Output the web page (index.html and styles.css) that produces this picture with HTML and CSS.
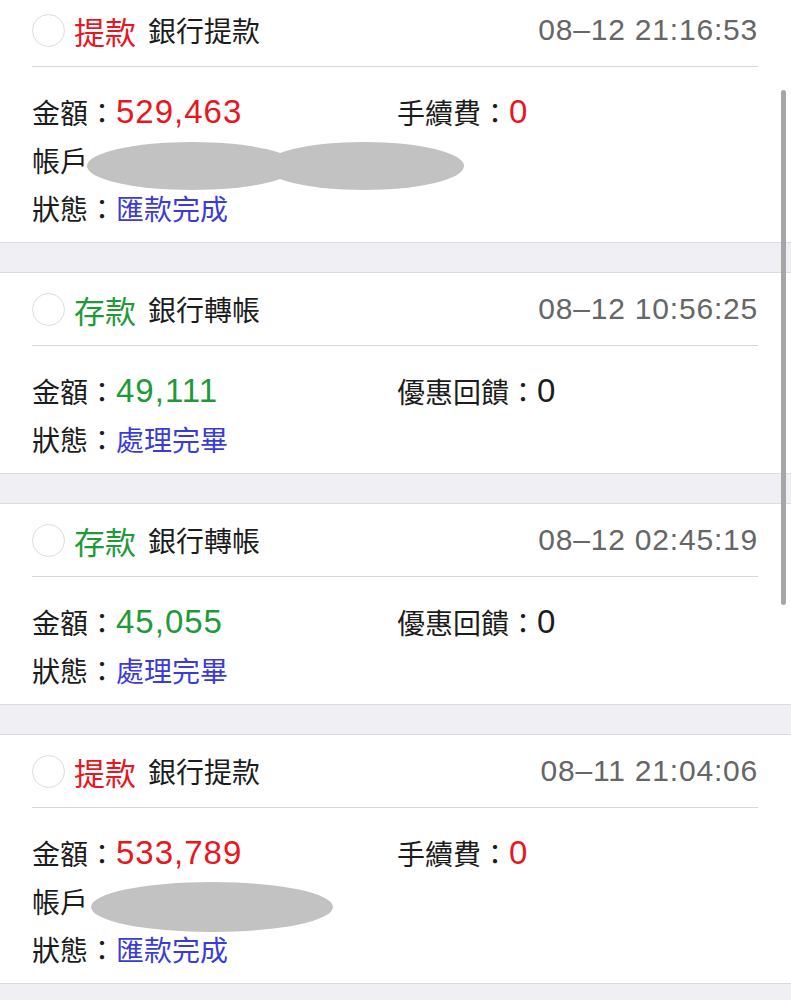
FILE: index.html
```html
<!DOCTYPE html>
<html lang="zh-Hant">
<head>
  <meta charset="UTF-8">
  <meta name="viewport" content="width=device-width, initial-scale=1.0">
  <title>交易紀錄</title>
  <link rel="stylesheet" href="styles.css">
</head>
<body>

  <div class="record-list">

    <div class="record">
      <div class="record-head">
        <span class="check"></span>
        <span class="type out">提款</span>
        <span class="method">銀行提款</span>
        <span class="time">08–12 21:16:53</span>
      </div>
      <div class="record-body">
        <div class="row">金額：<span class="num out">529,463</span></div>
        <div class="row">手續費：<span class="num out">0</span></div>
        <div class="row full">帳戶
          <svg class="mask" width="380" height="50" viewBox="0 0 380 50">
            <ellipse cx="106" cy="25" rx="105" ry="24" fill="#c2c2c2"/>
            <ellipse cx="278" cy="25" rx="100" ry="24" fill="#c2c2c2"/>
          </svg>
        </div>
        <div class="row full">狀態：<span class="status">匯款完成</span></div>
      </div>
    </div>

    <div class="record">
      <div class="record-head">
        <span class="check"></span>
        <span class="type in">存款</span>
        <span class="method">銀行轉帳</span>
        <span class="time">08–12 10:56:25</span>
      </div>
      <div class="record-body">
        <div class="row">金額：<span class="num in">49,111</span></div>
        <div class="row">優惠回饋：<span class="num">0</span></div>
        <div class="row full">狀態：<span class="status">處理完畢</span></div>
      </div>
    </div>

    <div class="record">
      <div class="record-head">
        <span class="check"></span>
        <span class="type in">存款</span>
        <span class="method">銀行轉帳</span>
        <span class="time">08–12 02:45:19</span>
      </div>
      <div class="record-body">
        <div class="row">金額：<span class="num in">45,055</span></div>
        <div class="row">優惠回饋：<span class="num">0</span></div>
        <div class="row full">狀態：<span class="status">處理完畢</span></div>
      </div>
    </div>

    <div class="record">
      <div class="record-head">
        <span class="check"></span>
        <span class="type out">提款</span>
        <span class="method">銀行提款</span>
        <span class="time">08–11 21:04:06</span>
      </div>
      <div class="record-body">
        <div class="row">金額：<span class="num out">533,789</span></div>
        <div class="row">手續費：<span class="num out">0</span></div>
        <div class="row full">帳戶
          <svg class="mask" width="260" height="50" viewBox="0 0 260 50">
            <ellipse cx="126" cy="25" rx="121" ry="25" fill="#c2c2c2"/>
          </svg>
        </div>
        <div class="row full">狀態：<span class="status">匯款完成</span></div>
      </div>
    </div>

  </div>

  <div class="scrollbar"></div>

</body>
</html>
```

FILE: styles.css
```css
body {
  margin: 0;
  background-color: #efeff4;
  font-family: "Liberation Sans", "Noto Sans CJK TC", sans-serif;
  color: #1c1c1c;
  overflow: hidden;
}
.record-list {
  margin-top: -7px;
}
.record {
  background-color: #fff;
  border-top: 1px solid #dcdce0;
  border-bottom: 1px solid #dcdce0;
  margin-bottom: 29px;
}
.record-head {
  display: flex;
  align-items: center;
  height: 72px;
  margin: 0 33px 0 32px;
  border-bottom: 1px solid #d8d8d8;
}
.check {
  width: 31px;
  height: 31px;
  border: 1.5px solid #dcdcdc;
  border-radius: 50%;
  margin-right: 9px;
}
.type {
  font-family: "Noto Sans CJK TC", sans-serif;
  font-size: 31px;
}
.method {
  font-family: "Noto Sans CJK TC", sans-serif;
  font-size: 28px;
  margin-left: 12px;
}
.time {
  margin-left: auto;
  font-size: 30px;
  letter-spacing: 0.8px;
  color: #666;
}
.out {
  color: #e8161e;
}
.in {
  color: #1f9a38;
}
.record-body {
  display: grid;
  grid-template-columns: 365px 1fr;
  padding: 21px 32px 10px;
  font-family: "Noto Sans CJK TC", sans-serif;
  font-size: 28px;
}
.row {
  display: flex;
  align-items: center;
  height: 48px;
}
.row.full {
  grid-column: 1 / 3;
}
.num {
  font-family: "Liberation Sans", sans-serif;
  font-size: 33px;
  letter-spacing: 1px;
}
.status {
  color: #3b3bd8;
}
.mask {
  flex: none;
  margin: 0 0 -12px -2px;
}
.scrollbar {
  position: fixed;
  top: 90px;
  right: 5px;
  width: 5px;
  height: 515px;
  border-radius: 3px;
  background-color: #a6a6a6;
}
```
